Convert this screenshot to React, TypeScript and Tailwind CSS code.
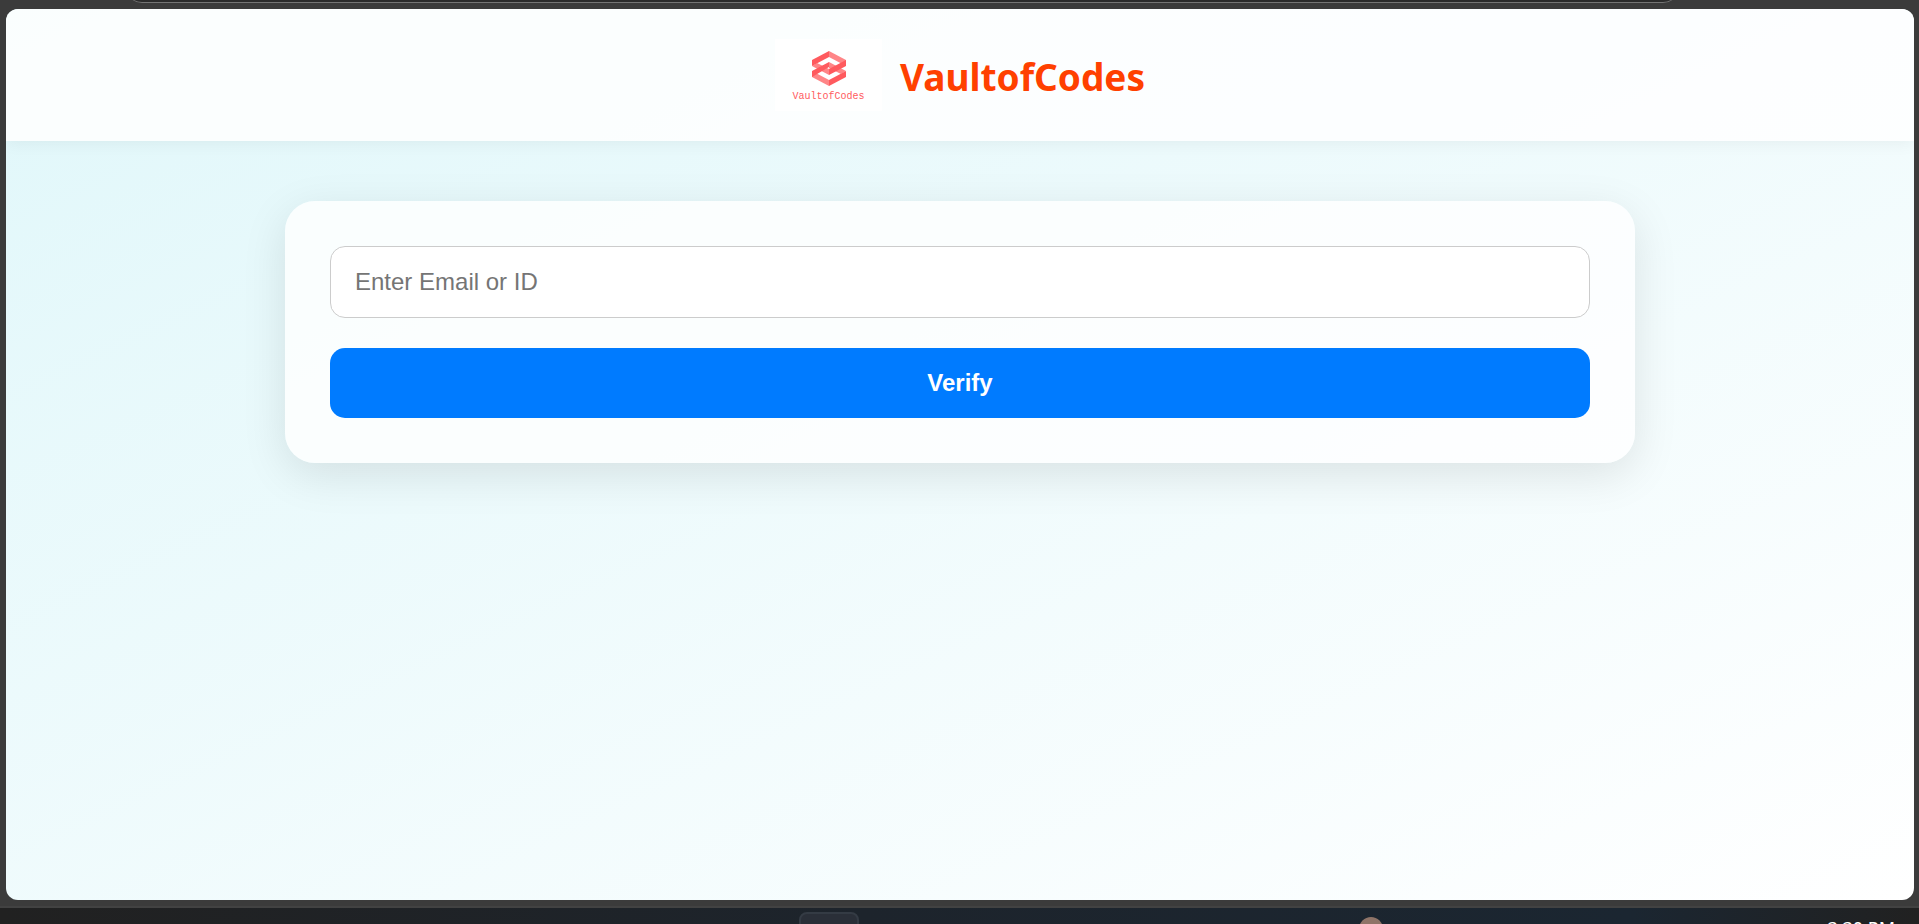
function Logo() {
  return (
    <svg viewBox="0 0 34 35" className="h-[35px] w-[34px]" aria-hidden="true">
      <path d="M17 0 34 9v6L17 6z" fill="#ff8587" />
      <path d="M0 15 5 12 17 18v6z" fill="#ff8587" />
      <path d="M34 20 29 23 17 17v-6z" fill="#ff8587" />
      <path d="M0 20 17 29v6L0 26z" fill="#ff8587" />
      <path d="M17 0v6L0 15V9z" fill="#ff5a5e" />
      <path d="M34 20v6L17 35v-6z" fill="#ff5a5e" />
      <path d="M17 11v5L5 22 17 16 0 26v-6z" fill="#ff5a5e" />
      <path d="M17 24v-6L34 9v6z" fill="#ff5a5e" />
    </svg>
  );
}

export default function App() {
  return (
    <div className="flex h-screen min-h-[600px] flex-col overflow-hidden bg-[#3b3b3b] font-['Liberation_Sans',Arial,sans-serif]">
      <div className="flex h-[3px] shrink-0 items-end overflow-hidden pr-[240px] pl-[126px]">
        <div className="h-8 grow rounded-full border-b border-[#757575] bg-[#2b2b2b]" />
      </div>
      <div className="mt-[6px] mr-[5px] ml-[6px] flex grow flex-col overflow-hidden rounded-xl bg-[linear-gradient(to_bottom_right,#e0f7fa,#ffffff)]">
        <header className="flex items-center justify-center gap-[18px] bg-white/85 py-[30px] shadow-[0_3px_15px_rgba(0,0,0,0.05)]">
          <div className="flex h-[72px] w-[107px] flex-col items-center bg-white pt-3">
            <Logo />
            <span className="mt-[5px] font-['Liberation_Mono',monospace] text-[10px] leading-3 text-[#ff5a5e]">VaultofCodes</span>
          </div>
          <h1 className="pt-1 font-['Noto_Sans','Open_Sans',sans-serif] text-[37px] leading-[54px] font-bold text-[#ff4000]">VaultofCodes</h1>
        </header>
        <main className="flex grow flex-col items-center px-6 pt-[60px]">
          <form className="flex w-full max-w-[1350px] flex-col gap-[30px] rounded-[30px] bg-white/80 p-[45px] shadow-[0_12px_45px_rgba(0,0,0,0.1)]">
            <input type="text" aria-label="Email or ID" placeholder="Enter Email or ID" className="h-[72px] w-full rounded-[15px] border border-[#ccc] bg-white px-6 text-2xl text-black placeholder:text-[#757575]" />
            <button type="button" className="h-[70px] w-full rounded-[15px] bg-[#007bff] text-2xl font-bold text-white">Verify</button>
          </form>
        </main>
      </div>
      <footer className="mt-[6px] flex h-[18px] shrink-0 items-start overflow-hidden border-t-2 border-[#424242] bg-[linear-gradient(90deg,#212121,#1d242c_45%,#1b2631_85%,#212121)] pr-6 pl-[799px]">
        <div className="mt-1 h-[60px] w-[60px] shrink-0 rounded-lg border-2 border-[#343b44] bg-[#2a2f38]" />
        <div className="mt-[9px] ml-[500px] size-6 shrink-0 rounded-full bg-[#8f7468]" />
        <time className="mt-2 ml-auto shrink-0 font-['Noto_Sans',sans-serif] text-[18px] leading-6 text-white">3:30 PM</time>
      </footer>
    </div>
  );
}
